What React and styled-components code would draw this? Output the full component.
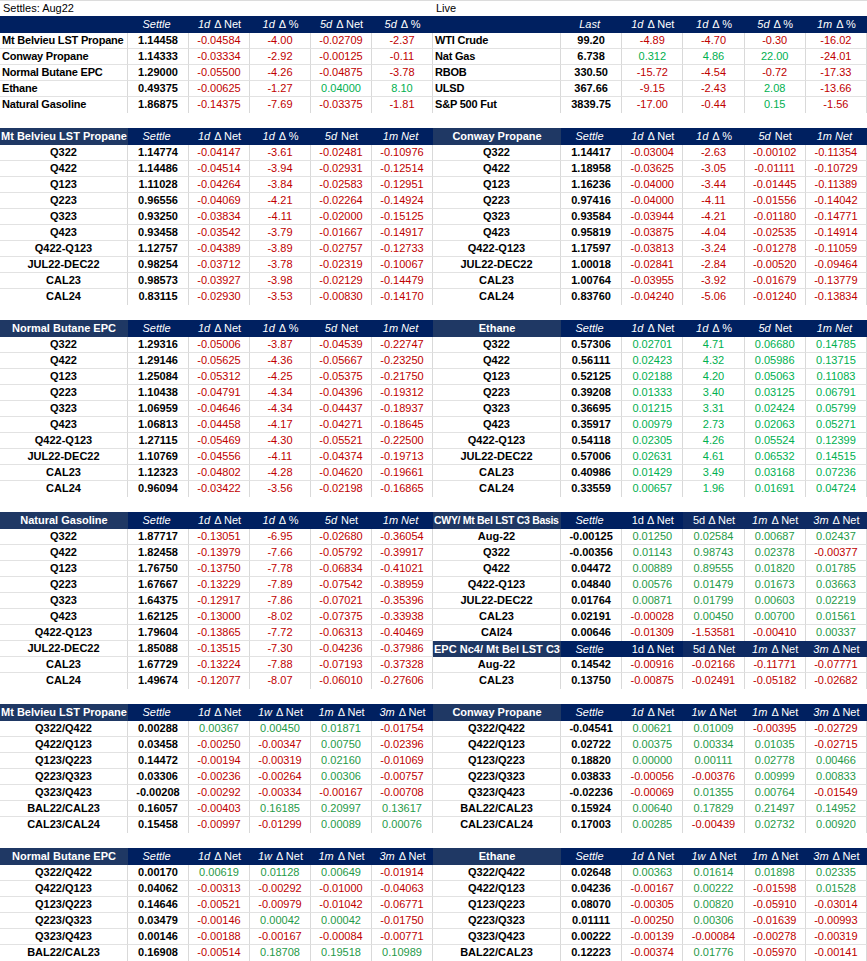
import React from 'react';
import styled, { createGlobalStyle } from 'styled-components';

const RED = '#c00000';
const GREEN = '#00b050';
const DEEP_GREEN = '#1f9a48';

const GlobalStyle = createGlobalStyle`
  html, body {
    margin: 0;
    padding: 0;
    background: #ffffff;
  }
  body {
    font-family: "Liberation Sans", Arial, sans-serif;
    font-size: 11px;
    color: #000;
    overflow: hidden;
  }
`;

const Page = styled.div`
  width: 867px;
  height: 961px;
  overflow: hidden;
`;

const Band = styled.div`
  display: grid;
  grid-template-columns: 433px 434px;
  margin-top: ${(p) => p.$gap || 0}px;
`;

const Stack = styled.div`
  display: flex;
  flex-direction: column;
`;

const Caption = styled.div`
  height: 16px;
  line-height: 15px;
  padding-left: 3px;
  box-sizing: border-box;
  border-top: 1px solid #dcdcdc;
`;

const Row = styled.div`
  display: grid;
  grid-template-columns: 128px repeat(5, 1fr);
  height: ${(p) => p.$h}px;
`;

const HeadCell = styled.div`
  background: ${(p) => (p.$tone === 'light' ? '#1f3864' : p.$tone === 'mid' ? '#0e2a62' : '#002060')};
  color: #fff;
  line-height: ${(p) => p.$h}px;
  text-align: ${(p) => (p.$left ? 'left' : 'center')};
  padding-left: ${(p) => (p.$left ? 1 : 0)}px;
  font-size: ${(p) => (p.$left ? '10.5px' : '11px')};
  font-weight: ${(p) => (p.$bold ? 700 : 400)};
  letter-spacing: ${(p) => (p.$left ? '-0.3px' : 'normal')};
  white-space: nowrap;
  overflow: hidden;

  em {
    font-style: italic;
    margin-right: 4px;
  }
`;

const Cell = styled.div`
  box-sizing: border-box;
  border-right: 1px solid #d9d9d9;
  border-bottom: ${(p) => (p.$last ? 'none' : '1px solid #e2e2e2')};
  line-height: 15px;
  text-align: ${(p) => (p.$left ? 'left' : 'center')};
  padding-left: ${(p) => (p.$left ? 2 : 0)}px;
  letter-spacing: ${(p) => (p.$left ? '-0.2px' : 'normal')};
  font-weight: ${(p) => (p.$bold ? 700 : 400)};
  color: ${(p) => p.$color || '#000'};
  white-space: nowrap;
  overflow: hidden;
`;

const h = (it, rest) => ({ it, rest });

const Label = ({ head }) => (
  <>
    {head.it && <em>{head.it}</em>}
    {head.rest}
  </>
);

const tint = (value, green) => (value.trim().startsWith('-') ? RED : green);

const Table = ({ title = '', titleTone = 'light', titleLeft, heads, tones = [], rows, leftLabels, green = GREEN, headH = 17 }) => (
  <div>
    <Row $h={headH}>
      <HeadCell $h={headH} $tone={titleTone} $bold $left={titleLeft}>
        {title}
      </HeadCell>
      {heads.map((head, i) => (
        <HeadCell key={i} $h={headH} $tone={tones[i]}>
          <Label head={head} />
        </HeadCell>
      ))}
    </Row>
    {rows.map((r, i) => {
      const last = i === rows.length - 1;
      return (
        <Row key={r[0]} $h={16}>
          <Cell $bold $left={leftLabels} $last={last}>
            {r[0]}
          </Cell>
          <Cell $bold $last={last}>
            {r[1]}
          </Cell>
          {r.slice(2).map((v, j) => (
            <Cell key={j} $color={tint(v, green)} $last={last}>
              {v}
            </Cell>
          ))}
        </Row>
      );
    })}
  </div>
);

const fix = (text) =>
  text
    .trim()
    .split('\n')
    .map((line) => line.trim().split(/\s+/));

const settlesRows = [
  ['Mt Belvieu LST Propane', '1.14458', '-0.04584', '-4.00', '-0.02709', '-2.37'],
  ['Conway Propane', '1.14333', '-0.03334', '-2.92', '-0.00125', '-0.11'],
  ['Normal Butane EPC', '1.29000', '-0.05500', '-4.26', '-0.04875', '-3.78'],
  ['Ethane', '0.49375', '-0.00625', '-1.27', '0.04000', '8.10'],
  ['Natural Gasoline', '1.86875', '-0.14375', '-7.69', '-0.03375', '-1.81'],
];

const liveRows = [
  ['WTI Crude', '99.20', '-4.89', '-4.70', '-0.30', '-16.02'],
  ['Nat Gas', '6.738', '0.312', '4.86', '22.00', '-24.01'],
  ['RBOB', '330.50', '-15.72', '-4.54', '-0.72', '-17.33'],
  ['ULSD', '367.66', '-9.15', '-2.43', '2.08', '-13.66'],
  ['S&P 500 Fut', '3839.75', '-17.00', '-0.44', '0.15', '-1.56'],
];

const mtBelvieu = fix(`
Q322 1.14774 -0.04147 -3.61 -0.02481 -0.10976
Q422 1.14486 -0.04514 -3.94 -0.02931 -0.12514
Q123 1.11028 -0.04264 -3.84 -0.02583 -0.12951
Q223 0.96556 -0.04069 -4.21 -0.02264 -0.14924
Q323 0.93250 -0.03834 -4.11 -0.02000 -0.15125
Q423 0.93458 -0.03542 -3.79 -0.01667 -0.14917
Q422-Q123 1.12757 -0.04389 -3.89 -0.02757 -0.12733
JUL22-DEC22 0.98254 -0.03712 -3.78 -0.02319 -0.10067
CAL23 0.98573 -0.03927 -3.98 -0.02129 -0.14479
CAL24 0.83115 -0.02930 -3.53 -0.00830 -0.14170
`);

const conway = fix(`
Q322 1.14417 -0.03004 -2.63 -0.00102 -0.11354
Q422 1.18958 -0.03625 -3.05 -0.01111 -0.10729
Q123 1.16236 -0.04000 -3.44 -0.01445 -0.11389
Q223 0.97416 -0.04000 -4.11 -0.01556 -0.14042
Q323 0.93584 -0.03944 -4.21 -0.01180 -0.14771
Q423 0.95819 -0.03875 -4.04 -0.02535 -0.14914
Q422-Q123 1.17597 -0.03813 -3.24 -0.01278 -0.11059
JUL22-DEC22 1.00018 -0.02841 -2.84 -0.00520 -0.09464
CAL23 1.00764 -0.03955 -3.92 -0.01679 -0.13779
CAL24 0.83760 -0.04240 -5.06 -0.01240 -0.13834
`);

const butane = fix(`
Q322 1.29316 -0.05006 -3.87 -0.04539 -0.22747
Q422 1.29146 -0.05625 -4.36 -0.05667 -0.23250
Q123 1.25084 -0.05312 -4.25 -0.05375 -0.21750
Q223 1.10438 -0.04791 -4.34 -0.04396 -0.19312
Q323 1.06959 -0.04646 -4.34 -0.04437 -0.18937
Q423 1.06813 -0.04458 -4.17 -0.04271 -0.18645
Q422-Q123 1.27115 -0.05469 -4.30 -0.05521 -0.22500
JUL22-DEC22 1.10769 -0.04556 -4.11 -0.04374 -0.19713
CAL23 1.12323 -0.04802 -4.28 -0.04620 -0.19661
CAL24 0.96094 -0.03422 -3.56 -0.02198 -0.16865
`);

const ethane = fix(`
Q322 0.57306 0.02701 4.71 0.06680 0.14785
Q422 0.56111 0.02423 4.32 0.05986 0.13715
Q123 0.52125 0.02188 4.20 0.05063 0.11083
Q223 0.39208 0.01333 3.40 0.03125 0.06791
Q323 0.36695 0.01215 3.31 0.02424 0.05799
Q423 0.35917 0.00979 2.73 0.02063 0.05271
Q422-Q123 0.54118 0.02305 4.26 0.05524 0.12399
JUL22-DEC22 0.57006 0.02631 4.61 0.06532 0.14515
CAL23 0.40986 0.01429 3.49 0.03168 0.07236
CAL24 0.33559 0.00657 1.96 0.01691 0.04724
`);

const gasoline = fix(`
Q322 1.87717 -0.13051 -6.95 -0.02680 -0.36054
Q422 1.82458 -0.13979 -7.66 -0.05792 -0.39917
Q123 1.76750 -0.13750 -7.78 -0.06834 -0.41021
Q223 1.67667 -0.13229 -7.89 -0.07542 -0.38959
Q323 1.64375 -0.12917 -7.86 -0.07021 -0.35396
Q423 1.62125 -0.13000 -8.02 -0.07375 -0.33938
Q422-Q123 1.79604 -0.13865 -7.72 -0.06313 -0.40469
JUL22-DEC22 1.85088 -0.13515 -7.30 -0.04236 -0.37986
CAL23 1.67729 -0.13224 -7.88 -0.07193 -0.37328
CAL24 1.49674 -0.12077 -8.07 -0.06010 -0.27606
`);

const cwyBasis = fix(`
Aug-22 -0.00125 0.01250 0.02584 0.00687 0.02437
Q322 -0.00356 0.01143 0.98743 0.02378 -0.00377
Q422 0.04472 0.00889 0.89555 0.01820 0.01785
Q422-Q123 0.04840 0.00576 0.01479 0.01673 0.03663
JUL22-DEC22 0.01764 0.00871 0.01799 0.00603 0.02219
CAL23 0.02191 -0.00028 0.00450 0.00700 0.01561
CAl24 0.00646 -0.01309 -1.53581 -0.00410 0.00337
`);

const epcBasis = fix(`
Aug-22 0.14542 -0.00916 -0.02166 -0.11771 -0.07771
CAL23 0.13750 -0.00875 -0.02491 -0.05182 -0.02682
`);

const mtSpreads = fix(`
Q322/Q422 0.00288 0.00367 0.00450 0.01871 -0.01754
Q422/Q123 0.03458 -0.00250 -0.00347 0.00750 -0.02396
Q123/Q223 0.14472 -0.00194 -0.00319 0.02160 -0.01069
Q223/Q323 0.03306 -0.00236 -0.00264 0.00306 -0.00757
Q323/Q423 -0.00208 -0.00292 -0.00334 -0.00167 -0.00708
BAL22/CAL23 0.16057 -0.00403 0.16185 0.20997 0.13617
CAL23/CAL24 0.15458 -0.00997 -0.01299 0.00089 0.00076
`);

const conwaySpreads = fix(`
Q322/Q422 -0.04541 0.00621 0.01009 -0.00395 -0.02729
Q422/Q123 0.02722 0.00375 0.00334 0.01035 -0.02715
Q123/Q223 0.18820 0.00000 0.00111 0.02778 0.00466
Q223/Q323 0.03833 -0.00056 -0.00376 0.00999 0.00833
Q323/Q423 -0.02236 -0.00069 0.01355 0.00764 -0.01549
BAL22/CAL23 0.15924 0.00640 0.17829 0.21497 0.14952
CAL23/CAL24 0.17003 0.00285 -0.00439 0.02732 0.00920
`);

const butaneSpreads = fix(`
Q322/Q422 0.00170 0.00619 0.01128 0.00649 -0.01914
Q422/Q123 0.04062 -0.00313 -0.00292 -0.01000 -0.04063
Q123/Q223 0.14646 -0.00521 -0.00979 -0.01042 -0.06771
Q223/Q323 0.03479 -0.00146 0.00042 0.00042 -0.01750
Q323/Q423 0.00146 -0.00188 -0.00167 -0.00084 -0.00771
BAL22/CAL23 0.16908 -0.00514 0.18708 0.19518 0.10989
`);

const ethaneSpreads = fix(`
Q322/Q422 0.02648 0.00363 0.01614 0.01898 0.02335
Q422/Q123 0.04236 -0.00167 0.00222 -0.01598 0.01528
Q123/Q223 0.08070 -0.00305 0.00820 -0.05910 -0.03014
Q223/Q323 0.01111 -0.00250 0.00306 -0.01639 -0.00993
Q323/Q423 0.00222 -0.00139 -0.00084 -0.00278 -0.00319
BAL22/CAL23 0.12223 -0.00374 0.01776 -0.05970 -0.00141
`);

const settleHeads = [h('Settle', ''), h('1d', 'Δ Net'), h('1d', 'Δ %'), h('5d', 'Δ Net'), h('5d', 'Δ %')];
const liveHeads = [h('Last', ''), h('1d', 'Δ Net'), h('1d', 'Δ %'), h('5d', 'Δ %'), h('1m', 'Δ %')];
const outright = [h('Settle', ''), h('1d', 'Δ Net'), h('1d', 'Δ %'), h('5d', 'Net'), h('1m Net', '')];
const spreadHeads = [h('Settle', ''), h('1d', 'Δ Net'), h('1w', 'Δ Net'), h('1m', 'Δ Net'), h('3m', 'Δ Net')];
const basisHeads = [h('Settle', ''), h('', '1d Δ Net'), h('', '5d Δ Net'), h('1m', 'Δ Net'), h('3m', 'Δ Net')];
const basisTones = ['dark', 'dark', 'mid', 'mid', 'mid'];

export default function App() {
  return (
    <Page>
      <GlobalStyle />
      <Band>
        <Stack>
          <Caption>Settles: Aug22</Caption>
          <Table titleTone="dark" heads={settleHeads} rows={settlesRows} leftLabels />
        </Stack>
        <Stack>
          <Caption>Live</Caption>
          <Table titleTone="dark" heads={liveHeads} rows={liveRows} leftLabels />
        </Stack>
      </Band>

      <Band $gap={15}>
        <Table title="Mt Belvieu LST Propane" heads={outright} rows={mtBelvieu} />
        <Table title="Conway Propane" heads={outright} rows={conway} />
      </Band>

      <Band $gap={15}>
        <Table title="Normal Butane EPC" heads={outright} rows={butane} />
        <Table title="Ethane" heads={outright} rows={ethane} />
      </Band>

      <Band $gap={15}>
        <Table title="Natural Gasoline" heads={outright} rows={gasoline} />
        <Stack>
          <Table
            title="CWY/ Mt Bel LST C3 Basis"
            titleLeft
            heads={basisHeads}
            tones={basisTones}
            rows={cwyBasis}
            green={DEEP_GREEN}
          />
          <Table
            title="EPC Nc4/ Mt Bel LST C3"
            heads={basisHeads}
            tones={basisTones}
            rows={epcBasis}
            green={DEEP_GREEN}
            headH={16}
          />
        </Stack>
      </Band>

      <Band $gap={15}>
        <Table title="Mt Belvieu LST Propane" heads={spreadHeads} rows={mtSpreads} green={DEEP_GREEN} />
        <Table title="Conway Propane" heads={spreadHeads} rows={conwaySpreads} green={DEEP_GREEN} />
      </Band>

      <Band $gap={15}>
        <Table title="Normal Butane EPC" heads={spreadHeads} rows={butaneSpreads} green={DEEP_GREEN} />
        <Table title="Ethane" heads={spreadHeads} rows={ethaneSpreads} green={DEEP_GREEN} />
      </Band>
    </Page>
  );
}
